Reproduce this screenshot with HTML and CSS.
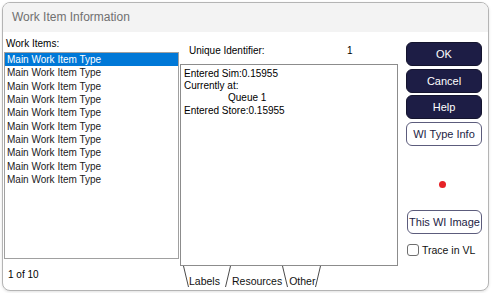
FILE: index.html
```html
<!DOCTYPE html>
<html>
<head>
<meta charset="utf-8">
<link rel="stylesheet" href="styles.css">
</head>
<body>
<div class="window">
  <div class="titlebar">Work Item Information</div>
  <div class="content">
    <div class="col-left">
      <div class="label">Work Items:</div>
      <div class="listbox">
        <div class="item selected">Main Work Item Type</div>
        <div class="item">Main Work Item Type</div>
        <div class="item">Main Work Item Type</div>
        <div class="item">Main Work Item Type</div>
        <div class="item">Main Work Item Type</div>
        <div class="item">Main Work Item Type</div>
        <div class="item">Main Work Item Type</div>
        <div class="item">Main Work Item Type</div>
        <div class="item">Main Work Item Type</div>
        <div class="item">Main Work Item Type</div>
      </div>
      <div class="count">1 of 10</div>
    </div>
    <div class="col-mid">
      <div class="uid"><span class="uid-label">Unique Identifier:</span><span class="uid-value">1</span></div>
      <div class="textbox">
        <div class="line">Entered Sim:0.15955</div>
        <div class="line">Currently at:</div>
        <div class="line indent">Queue 1</div>
        <div class="line">Entered Store:0.15955</div>
      </div>
      <div class="tabs">
        <svg class="edge" viewBox="0 0 6 21"><line x1="0.5" y1="0" x2="5.5" y2="21"/></svg>
        <span class="tab tab-labels">Labels</span>
        <svg class="edge" viewBox="0 0 6 21"><line x1="0.5" y1="21" x2="5.5" y2="0"/></svg>
        <span class="tab">Resources</span>
        <svg class="edge" viewBox="0 0 6 21"><line x1="0.5" y1="0" x2="5.5" y2="21"/></svg>
        <span class="tab">Other</span>
        <svg class="edge" viewBox="0 0 6 21"><line x1="0.5" y1="21" x2="5.5" y2="0"/></svg>
      </div>
    </div>
    <div class="col-right">
      <button class="btn btn-dark">OK</button>
      <button class="btn btn-dark">Cancel</button>
      <button class="btn btn-dark">Help</button>
      <button class="btn btn-light">WI Type Info</button>
      <div class="dot"></div>
      <button class="btn btn-light btn-image">This WI Image</button>
      <label class="check-row"><span class="checkbox"></span><span class="check-label">Trace in VL</span></label>
    </div>
  </div>
</div>
</body>
</html>
```

FILE: styles.css
```css
html, body {
  margin: 0;
  padding: 0;
  background: #ffffff;
}
body {
  width: 493px;
  height: 293px;
  overflow: hidden;
  font-family: "Liberation Sans", Arial, sans-serif;
  font-size: 10px;
  color: #000;
}
.window {
  box-sizing: border-box;
  margin: 2px 0 0 2px;
  width: 487px;
  height: 289px;
  border: 1px solid #b4b4b4;
  border-radius: 8px;
  background: #ffffff;
  overflow: hidden;
  display: flex;
  flex-direction: column;
  box-shadow: 0 1px 3px rgba(0,0,0,0.12);
}
.titlebar {
  height: 29px;
  flex: none;
  background: #f3f3f3;
  color: #707070;
  font-size: 12px;
  line-height: 29px;
  padding-left: 9px;
}
.content {
  flex: 1;
  display: flex;
  flex-direction: row;
}
.col-left {
  margin-left: 1px;
  width: 175px;
  display: flex;
  flex-direction: column;
  padding-top: 6px;
}
.label {
  line-height: 12px;
  padding-left: 2px;
}
.listbox {
  box-sizing: border-box;
  margin-top: 2px;
  height: 207px;
  border: 1px solid #a0a0a0;
  background: #fff;
}
.item {
  height: 13.33px;
  line-height: 13.33px;
  padding-left: 2px;
  color: #1a1a1a;
  white-space: nowrap;
}
.item.selected {
  background: #0078d7;
  color: #ffffff;
}
.count {
  margin-top: 10px;
  line-height: 12px;
  padding-left: 4px;
}
.col-mid {
  margin-left: 1px;
  width: 218px;
  display: flex;
  flex-direction: column;
  padding-top: 13px;
}
.uid {
  display: flex;
  line-height: 12px;
  padding-left: 9px;
}
.uid-label {
  width: 158px;
}
.textbox {
  box-sizing: border-box;
  margin-top: 7px;
  height: 202px;
  border: 1px solid #8c8c8c;
  padding: 2.5px 3px 0 3px;
  background: #fff;
}
.line {
  line-height: 12.4px;
  white-space: nowrap;
}
.line.indent {
  padding-left: 44px;
}
.tabs {
  display: flex;
  height: 21px;
  margin-left: 3px;
}
.edge {
  width: 6px;
  height: 21px;
  flex: none;
}
.edge line {
  stroke: #4a4a4a;
  stroke-width: 1;
}
.tab {
  display: flex;
  align-items: flex-end;
  line-height: 12px;
  padding: 0 0 0 1px;
  font-size: 10.5px;
  color: #111;
}
.tab-labels {
  padding-left: 0;
  padding-right: 5px;
}
.col-right {
  margin-left: 8px;
  width: 76px;
  display: flex;
  flex-direction: column;
  padding-top: 10px;
}
.btn {
  box-sizing: border-box;
  height: 24px;
  width: 76px;
  margin: 0 0 2.5px 0;
  padding: 0;
  border-radius: 6px;
  font-family: "Liberation Sans", Arial, sans-serif;
  font-size: 11px;
  line-height: 20px;
  text-align: center;
}
.btn-dark {
  background: #1d1d45;
  border: 1px solid #14142e;
  color: #ffffff;
}
.btn-light {
  background: #ffffff;
  border: 1.5px solid #5c5c7c;
  color: #1d1d45;
}
.dot {
  width: 7px;
  height: 7px;
  border-radius: 50%;
  background: #e62227;
  margin: 33px 0 0 32.5px;
}
.btn-image {
  margin-top: 21.5px;
  margin-left: 1px;
  width: 75px;
}
.check-row {
  display: flex;
  align-items: center;
  margin-top: 7.5px;
  margin-left: 1px;
  height: 12px;
}
.checkbox {
  box-sizing: border-box;
  width: 12px;
  height: 12px;
  border: 1px solid #6e6e6e;
  border-radius: 3px;
  background: #fff;
  flex: none;
}
.check-label {
  margin-left: 3px;
  font-size: 10.5px;
  line-height: 12px;
  color: #111;
}
```
